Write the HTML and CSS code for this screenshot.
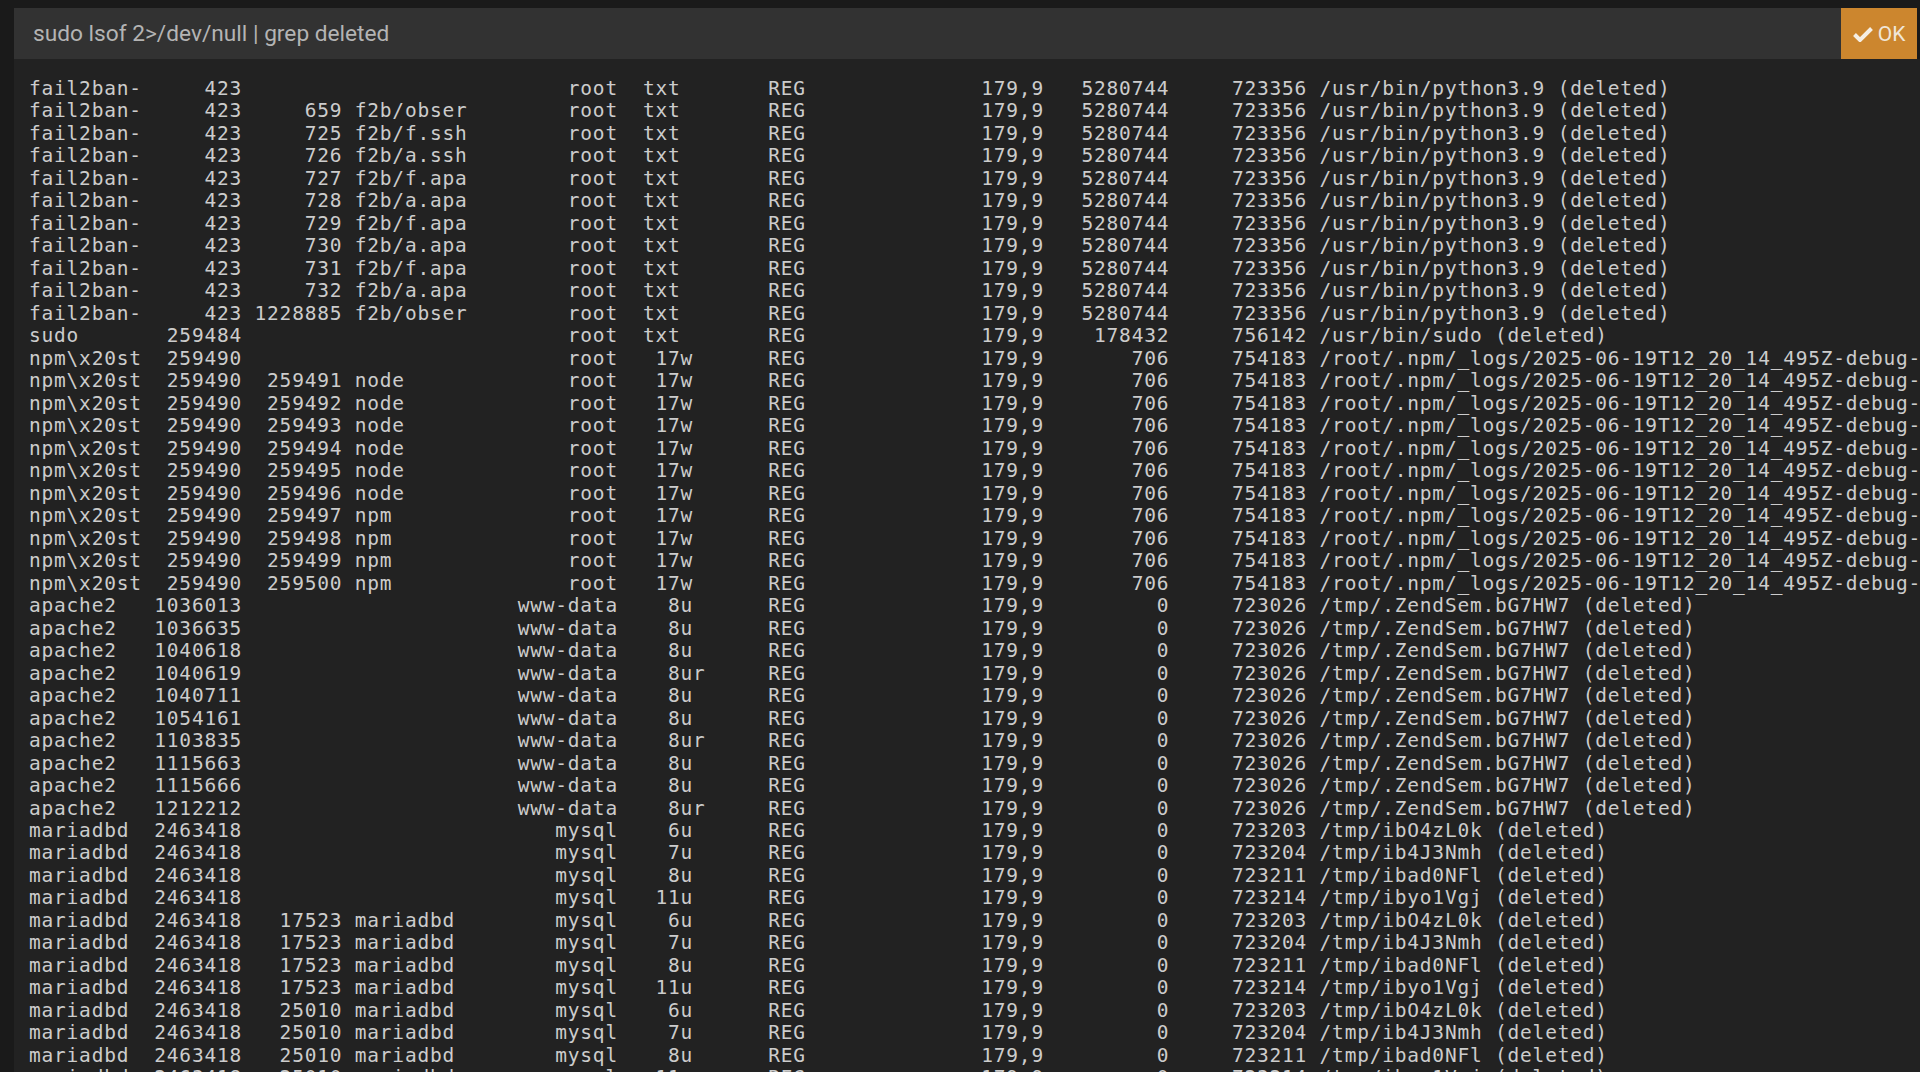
FILE: index.html
```html
<!DOCTYPE html>
<html lang="en">
<head>
<meta charset="utf-8">
<title>sudo lsof</title>
<link rel="stylesheet" href="styles.css">
</head>
<body>
<main class="panel">
<header class="bar">
<div class="command">sudo lsof 2&gt;/dev/null | grep deleted</div>
<button class="ok" type="button"><svg class="check" viewBox="0 0 20 16" aria-hidden="true"><path d="M1.5 8.5 7 14 18.5 2.5"/></svg>OK</button>
</header>
<pre class="output">fail2ban-     423                          root  txt       REG              179,9   5280744     723356 /usr/bin/python3.9 (deleted)
fail2ban-     423     659 f2b/obser        root  txt       REG              179,9   5280744     723356 /usr/bin/python3.9 (deleted)
fail2ban-     423     725 f2b/f.ssh        root  txt       REG              179,9   5280744     723356 /usr/bin/python3.9 (deleted)
fail2ban-     423     726 f2b/a.ssh        root  txt       REG              179,9   5280744     723356 /usr/bin/python3.9 (deleted)
fail2ban-     423     727 f2b/f.apa        root  txt       REG              179,9   5280744     723356 /usr/bin/python3.9 (deleted)
fail2ban-     423     728 f2b/a.apa        root  txt       REG              179,9   5280744     723356 /usr/bin/python3.9 (deleted)
fail2ban-     423     729 f2b/f.apa        root  txt       REG              179,9   5280744     723356 /usr/bin/python3.9 (deleted)
fail2ban-     423     730 f2b/a.apa        root  txt       REG              179,9   5280744     723356 /usr/bin/python3.9 (deleted)
fail2ban-     423     731 f2b/f.apa        root  txt       REG              179,9   5280744     723356 /usr/bin/python3.9 (deleted)
fail2ban-     423     732 f2b/a.apa        root  txt       REG              179,9   5280744     723356 /usr/bin/python3.9 (deleted)
fail2ban-     423 1228885 f2b/obser        root  txt       REG              179,9   5280744     723356 /usr/bin/python3.9 (deleted)
sudo       259484                          root  txt       REG              179,9    178432     756142 /usr/bin/sudo (deleted)
npm\x20st  259490                          root   17w      REG              179,9       706     754183 /root/.npm/_logs/2025-06-19T12_20_14_495Z-debug-
npm\x20st  259490  259491 node             root   17w      REG              179,9       706     754183 /root/.npm/_logs/2025-06-19T12_20_14_495Z-debug-
npm\x20st  259490  259492 node             root   17w      REG              179,9       706     754183 /root/.npm/_logs/2025-06-19T12_20_14_495Z-debug-
npm\x20st  259490  259493 node             root   17w      REG              179,9       706     754183 /root/.npm/_logs/2025-06-19T12_20_14_495Z-debug-
npm\x20st  259490  259494 node             root   17w      REG              179,9       706     754183 /root/.npm/_logs/2025-06-19T12_20_14_495Z-debug-
npm\x20st  259490  259495 node             root   17w      REG              179,9       706     754183 /root/.npm/_logs/2025-06-19T12_20_14_495Z-debug-
npm\x20st  259490  259496 node             root   17w      REG              179,9       706     754183 /root/.npm/_logs/2025-06-19T12_20_14_495Z-debug-
npm\x20st  259490  259497 npm              root   17w      REG              179,9       706     754183 /root/.npm/_logs/2025-06-19T12_20_14_495Z-debug-
npm\x20st  259490  259498 npm              root   17w      REG              179,9       706     754183 /root/.npm/_logs/2025-06-19T12_20_14_495Z-debug-
npm\x20st  259490  259499 npm              root   17w      REG              179,9       706     754183 /root/.npm/_logs/2025-06-19T12_20_14_495Z-debug-
npm\x20st  259490  259500 npm              root   17w      REG              179,9       706     754183 /root/.npm/_logs/2025-06-19T12_20_14_495Z-debug-
apache2   1036013                      www-data    8u      REG              179,9         0     723026 /tmp/.ZendSem.bG7HW7 (deleted)
apache2   1036635                      www-data    8u      REG              179,9         0     723026 /tmp/.ZendSem.bG7HW7 (deleted)
apache2   1040618                      www-data    8u      REG              179,9         0     723026 /tmp/.ZendSem.bG7HW7 (deleted)
apache2   1040619                      www-data    8ur     REG              179,9         0     723026 /tmp/.ZendSem.bG7HW7 (deleted)
apache2   1040711                      www-data    8u      REG              179,9         0     723026 /tmp/.ZendSem.bG7HW7 (deleted)
apache2   1054161                      www-data    8u      REG              179,9         0     723026 /tmp/.ZendSem.bG7HW7 (deleted)
apache2   1103835                      www-data    8ur     REG              179,9         0     723026 /tmp/.ZendSem.bG7HW7 (deleted)
apache2   1115663                      www-data    8u      REG              179,9         0     723026 /tmp/.ZendSem.bG7HW7 (deleted)
apache2   1115666                      www-data    8u      REG              179,9         0     723026 /tmp/.ZendSem.bG7HW7 (deleted)
apache2   1212212                      www-data    8ur     REG              179,9         0     723026 /tmp/.ZendSem.bG7HW7 (deleted)
mariadbd  2463418                         mysql    6u      REG              179,9         0     723203 /tmp/ibO4zL0k (deleted)
mariadbd  2463418                         mysql    7u      REG              179,9         0     723204 /tmp/ib4J3Nmh (deleted)
mariadbd  2463418                         mysql    8u      REG              179,9         0     723211 /tmp/ibad0NFl (deleted)
mariadbd  2463418                         mysql   11u      REG              179,9         0     723214 /tmp/ibyo1Vgj (deleted)
mariadbd  2463418   17523 mariadbd        mysql    6u      REG              179,9         0     723203 /tmp/ibO4zL0k (deleted)
mariadbd  2463418   17523 mariadbd        mysql    7u      REG              179,9         0     723204 /tmp/ib4J3Nmh (deleted)
mariadbd  2463418   17523 mariadbd        mysql    8u      REG              179,9         0     723211 /tmp/ibad0NFl (deleted)
mariadbd  2463418   17523 mariadbd        mysql   11u      REG              179,9         0     723214 /tmp/ibyo1Vgj (deleted)
mariadbd  2463418   25010 mariadbd        mysql    6u      REG              179,9         0     723203 /tmp/ibO4zL0k (deleted)
mariadbd  2463418   25010 mariadbd        mysql    7u      REG              179,9         0     723204 /tmp/ib4J3Nmh (deleted)
mariadbd  2463418   25010 mariadbd        mysql    8u      REG              179,9         0     723211 /tmp/ibad0NFl (deleted)
mariadbd  2463418   25010 mariadbd        mysql   11u      REG              179,9         0     723214 /tmp/ibyo1Vgj (deleted)</pre>
</main>
</body>
</html>
```
FILE: styles.css
```css
html, body {
  margin: 0;
  height: 100%;
  overflow: hidden;
  background: #1a1a1a;
}

.panel {
  display: flex;
  flex-direction: column;
  height: 1072px;
  box-sizing: border-box;
  padding: 8px 0 0 14px;
}

.bar {
  display: flex;
  flex: none;
  height: 51px;
  margin-right: 3px;
  background: #323232;
}

.command {
  flex: 1;
  padding-left: 19px;
  font: 22.7px/51px Roboto, sans-serif;
  color: #b4b4b4;
}

.ok {
  display: flex;
  align-items: center;
  justify-content: center;
  gap: 5px;
  width: 76px;
  padding: 0;
  border: 0;
  background: #cc862e;
  color: #f0e6d8;
  font: 21px Roboto, sans-serif;
}

.check {
  width: 20px;
  height: 16px;
  fill: none;
  stroke: #f5eee4;
  stroke-width: 4;
}

.output {
  flex: 1;
  margin: 0;
  padding: 19px 0 0 15px;
  overflow: hidden;
  background: #222222;
  color: #cccccc;
  font-family: "DejaVu Sans Mono", monospace;
  font-size: 19.5px;
  letter-spacing: 0.79px;
  line-height: 22.48px;
}
```
